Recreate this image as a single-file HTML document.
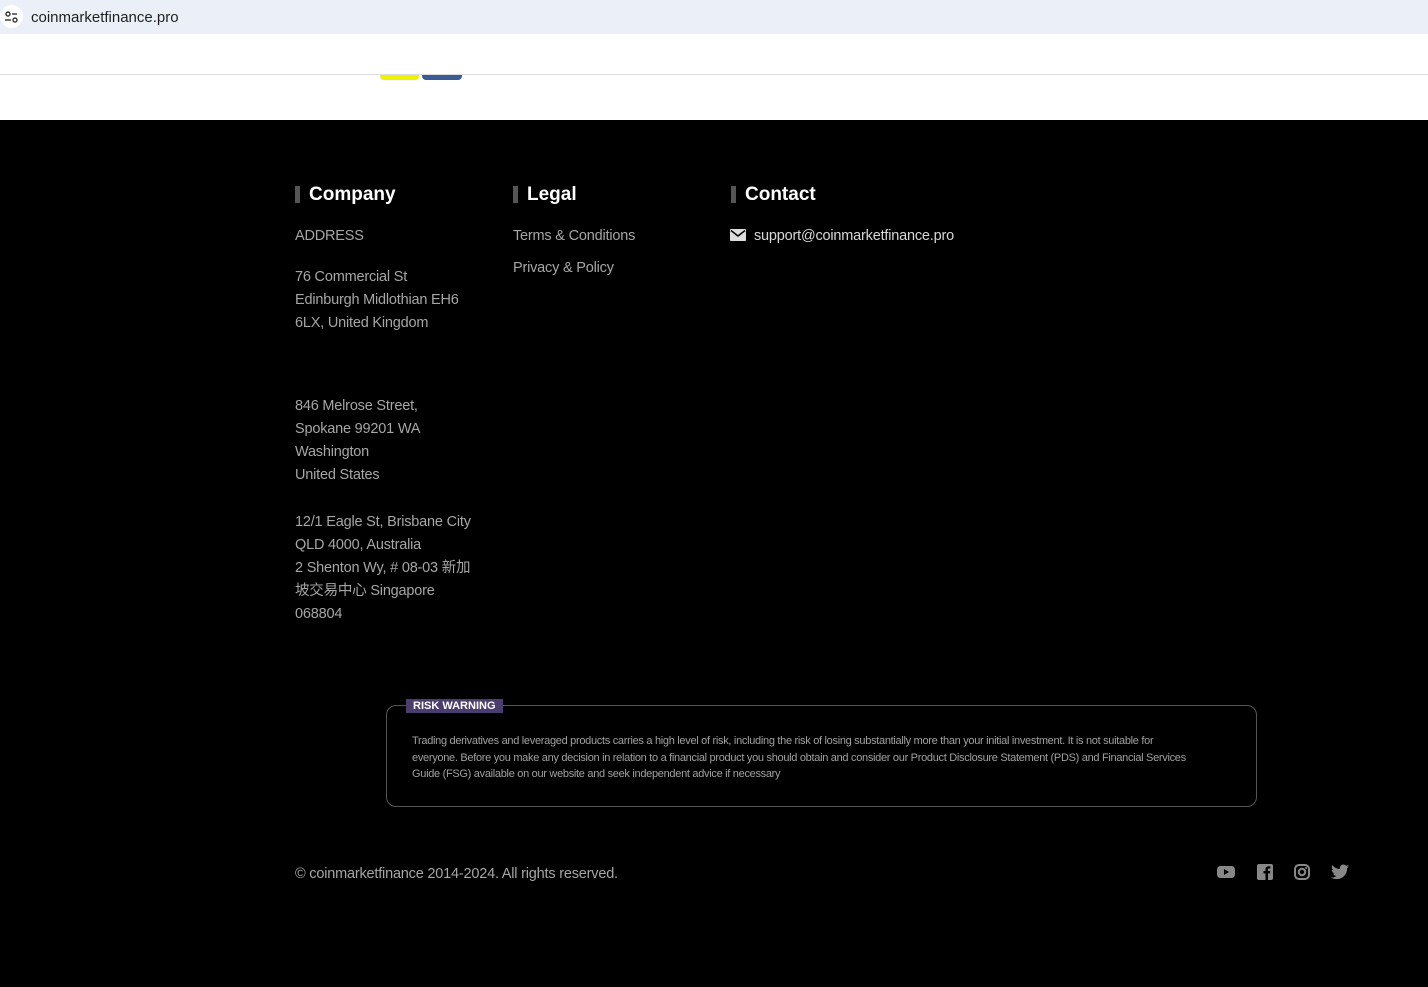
<!DOCTYPE html>
<html><head><meta charset="utf-8"><style>
*{margin:0;padding:0;box-sizing:border-box}
body{width:1428px;height:987px;overflow:hidden;background:#000;font-family:"Liberation Sans","Noto Sans CJK SC",sans-serif;position:relative}
.bar{position:absolute;left:0;top:0;width:1428px;height:34px;background:#ebf0f8}
.bar .ic{position:absolute;left:0;top:5px;width:23px;height:23px;border-radius:50%;background:#fff}
.bar .url{position:absolute;left:31px;top:9px;font-size:15px;color:#1f1f1f}
.white{position:absolute;left:0;top:34px;width:1428px;height:86px;background:#fff}
.line{position:absolute;left:0;top:74px;width:1428px;height:1px;background:#ddd}
.y{position:absolute;left:380px;top:75px;width:39px;height:5px;background:#eef200;border-radius:0 0 4px 4px}
.b{position:absolute;left:422px;top:75px;width:40px;height:5px;background:#3c5a96;border-radius:0 0 4px 4px}
.h{position:absolute;top:183px;font-size:19px;font-weight:bold;color:#fff;padding-left:14px;line-height:24px}
.h:before{content:"";position:absolute;left:0;top:3px;width:5px;height:17px;background:#555}
.t{position:absolute;font-size:14.5px;color:#a6a6a6;line-height:23px;letter-spacing:-0.2px}
.box{position:absolute;left:386px;top:705px;width:871px;height:102px;border:1px solid #555;border-radius:10px}
.rw{position:absolute;left:406px;top:699px;background:#4b3d6e;color:#fff;font-size:11px;font-weight:bold;padding:0 7px;line-height:14px}
.rt{position:absolute;left:412px;top:733px;width:785px;font-size:11px;color:#a0a0a0;line-height:16.5px;letter-spacing:-0.3px}
.soc{position:absolute;top:864px}
</style></head><body>
<div class="bar"><div class="ic"><svg width="23" height="23" viewBox="0 0 23 23"><circle cx="8" cy="9" r="2" fill="none" stroke="#333" stroke-width="1.4"/><line x1="12" y1="9" x2="17" y2="9" stroke="#333" stroke-width="1.4"/><line x1="5" y1="15" x2="11" y2="15" stroke="#333" stroke-width="1.4"/><circle cx="15" cy="15" r="2" fill="none" stroke="#333" stroke-width="1.4"/></svg></div><div class="url">coinmarketfinance.pro</div></div>
<div class="white"></div><div class="line"></div><div class="y"></div><div class="b"></div>

<div class="h" style="left:295px">Company</div>
<div class="h" style="left:513px">Legal</div>
<div class="h" style="left:731px">Contact</div>

<div class="t" style="left:295px;top:225px">ADDRESS</div>
<div class="t" style="left:295px;top:266px">76 Commercial St<br>Edinburgh Midlothian EH6<br>6LX, United Kingdom</div>
<div class="t" style="left:295px;top:395px">846 Melrose Street,<br>Spokane 99201 WA<br>Washington<br>United States</div>
<div class="t" style="left:295px;top:511px">12/1 Eagle St, Brisbane City<br>QLD 4000, Australia<br>2 Shenton Wy, # 08-03 新加<br>坡交易中心 Singapore<br>068804</div>

<div class="t" style="left:513px;top:225px">Terms &amp; Conditions</div>
<div class="t" style="left:513px;top:257px">Privacy &amp; Policy</div>

<svg style="position:absolute;left:730px;top:229px" width="16" height="12" viewBox="0 0 16 12"><rect x="0" y="0" width="16" height="12" rx="1" fill="#ddd"/><path d="M1 1.5 L8 7 L15 1.5" fill="none" stroke="#000" stroke-width="1.5"/></svg>
<div class="t" style="left:754px;top:225px;color:#d8d8d8">support@coinmarketfinance.pro</div>

<div class="box"></div>
<div class="rw">RISK WARNING</div>
<div class="rt">Trading derivatives and leveraged products carries a high level of risk, including the risk of losing substantially more than your initial investment. It is not suitable for everyone. Before you make any decision in relation to a financial product you should obtain and consider our Product Disclosure Statement (PDS) and Financial Services Guide (FSG) available on our website and seek independent advice if necessary</div>

<div class="t" style="left:295px;top:863px">© coinmarketfinance 2014-2024. All rights reserved.</div>

<svg class="soc" style="left:1217px" width="18" height="16" viewBox="0 0 18 16"><rect x="0" y="2" width="18" height="12" rx="3.5" fill="#888"/><path d="M7 5 L12 8 L7 11Z" fill="#000"/></svg>
<svg class="soc" style="left:1257px" width="16" height="16" viewBox="0 0 16 16"><rect x="0" y="0" width="16" height="16" rx="2" fill="#888"/><path d="M11 16 V9.5 H13 L13.3 7 H11 V5.6 C11 4.9 11.2 4.5 12.2 4.5 H13.4 V2.3 C13.1 2.2 12.4 2.2 11.6 2.2 C9.8 2.2 8.5 3.3 8.5 5.3 V7 H6.5 V9.5 H8.5 V16Z" fill="#000"/></svg>
<svg class="soc" style="left:1294px" width="16" height="16" viewBox="0 0 16 16"><rect x="1" y="1" width="14" height="14" rx="4" fill="none" stroke="#888" stroke-width="2"/><circle cx="8" cy="8" r="3.2" fill="none" stroke="#888" stroke-width="2"/><circle cx="12" cy="4" r="1" fill="#888"/></svg>
<svg class="soc" style="left:1331px" width="18" height="16" viewBox="0 0 24 20"><path d="M24 2.4c-.9.4-1.8.7-2.8.8 1-.6 1.8-1.6 2.2-2.7-1 .6-2 1-3.1 1.2C19.3.7 18 0 16.6 0c-2.7 0-4.9 2.2-4.9 4.9 0 .4 0 .8.1 1.1C7.7 5.8 4.1 3.9 1.7.9c-.4.7-.7 1.6-.7 2.5 0 1.7.9 3.2 2.2 4.1-.8 0-1.6-.2-2.2-.6v.1c0 2.4 1.7 4.4 3.9 4.8-.4.1-.8.2-1.3.2-.3 0-.6 0-.9-.1.6 2 2.4 3.4 4.6 3.4-1.7 1.3-3.8 2.1-6.1 2.1-.4 0-.8 0-1.2-.1 2.2 1.4 4.8 2.2 7.5 2.2 9.1 0 14-7.5 14-14v-.6c1-.7 1.8-1.6 2.5-2.5z" fill="#888"/></svg>
</body></html>
